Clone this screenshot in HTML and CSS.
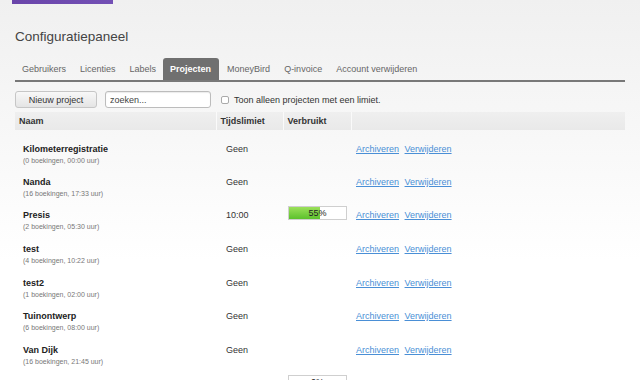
FILE: index.html
```html
<!DOCTYPE html>
<html lang="nl">
<head>
  <meta charset="UTF-8" />
  <title>Configuratiepaneel</title>
  <link rel="stylesheet" href="styles.css">
</head>
<body>
  <div class="topbar"></div>
  <div class="container">
    <h2>Configuratiepaneel</h2>

    <ul class="tabs">
      <li>Gebruikers</li>
      <li>Licenties</li>
      <li>Labels</li>
      <li class="active">Projecten</li>
      <li>MoneyBird</li>
      <li>Q-invoice</li>
      <li>Account verwijderen</li>
    </ul>

    <div class="toolbar">
      <button>Nieuw project</button>
      <input type="text" placeholder="zoeken...">
      <label class="filter"><input type="checkbox"> Toon alleen projecten met een limiet.</label>
    </div>

    <table class="projects">
      <colgroup>
        <col class="col-name">
        <col class="col-limit">
        <col class="col-used">
        <col class="col-actions">
      </colgroup>
      <thead>
        <tr>
          <th>Naam</th>
          <th>Tijdslimiet</th>
          <th>Verbruikt</th>
          <th></th>
        </tr>
      </thead>
      <tbody id="project-rows">
        <!-- rijen via JS -->
      </tbody>
    </table>
  </div>

  <script>
    const projecten = [
      { naam: "Kilometerregistratie", boekingen: 0, uren: "00:00", limiet: null },
      { naam: "Nanda", boekingen: 16, uren: "17:33", limiet: null },
      { naam: "Presis", boekingen: 2, uren: "05:30", limiet: "10:00", verbruikt: 55 },
      { naam: "test", boekingen: 4, uren: "10:22", limiet: null },
      { naam: "test2", boekingen: 1, uren: "02:00", limiet: null },
      { naam: "Tuinontwerp", boekingen: 6, uren: "08:00", limiet: null },
      { naam: "Van Dijk", boekingen: 16, uren: "21:45", limiet: null },
      { naam: "Verbouwing", boekingen: 0, uren: "00:00", limiet: "20:00", verbruikt: 0 }
    ];

    const rows = document.getElementById('project-rows');

    projecten.forEach(p => {
      const tr = document.createElement('tr');
      let verbruik = '';
      if (p.limiet) {
        verbruik = `
          <div class="progress">
            <div class="progress-fill" style="width:${p.verbruikt}%"></div>
            <span>${p.verbruikt}%</span>
          </div>`;
      }
      tr.innerHTML = `
        <td class="cell-name">
          <div class="name">${p.naam}</div>
          <div class="sub">(${p.boekingen} boekingen, ${p.uren} uur)</div>
        </td>
        <td class="cell-limit">${p.limiet || 'Geen'}</td>
        <td class="cell-used">${verbruik}</td>
        <td class="cell-actions"><a href="#">Archiveren</a> <a href="#">Verwijderen</a></td>
      `;
      rows.appendChild(tr);
    });
  </script>
</body>
</html>
```

FILE: styles.css
```css
body {
  margin: 0;
  font-family: 'Liberation Sans', Arial, sans-serif;
  font-size: 9px;
  color: #333;
  background: linear-gradient(#f0f0f0, #f8f8f8 140px, #fff 260px);
  min-height: 380px;
  overflow: hidden;
}

.topbar {
  width: 101px;
  height: 4px;
  margin-left: 12px;
  background: linear-gradient(90deg, #6a45aa, #7350b5);
}

.container {
  width: 610px;
  padding: 0 15px;
}

h2 {
  margin: 25px 0 0;
  font-size: 13.5px;
  line-height: 16px;
  font-weight: normal;
  color: #444;
}

.tabs {
  list-style: none;
  display: flex;
  margin: 13px 0 0;
  padding: 0;
  border-bottom: 2px solid #787878;
}

.tabs li {
  height: 22px;
  line-height: 22px;
  padding: 0 7px;
  color: #666;
}

.tabs li.active {
  background-color: #707070;
  color: #fff;
  font-weight: bold;
  border-radius: 3px 3px 0 0;
  padding: 0 8px 0 7px;
  margin-right: 1px;
}

.toolbar {
  display: flex;
  align-items: center;
  margin-top: 9px;
  height: 17px;
}

.toolbar button {
  height: 17px;
  width: 82px;
  padding: 0;
  font-family: inherit;
  font-size: 9px;
  color: #333;
  background: linear-gradient(#f8f8f8, #e4e4e4);
  border: 1px solid #c6c6c6;
  border-radius: 3px;
}

.toolbar input[type="text"] {
  box-sizing: border-box;
  height: 17px;
  width: 106px;
  margin-left: 8px;
  padding: 0 4px;
  font-family: inherit;
  font-size: 9px;
  border: 1px solid #bcbcbc;
  border-radius: 3px;
  background: #fff;
  box-shadow: inset 0 1px 1px rgba(0, 0, 0, 0.08);
}

.toolbar input::placeholder {
  color: #444;
}

.filter {
  display: flex;
  align-items: center;
  margin-left: 10px;
  color: #333;
}

.filter input {
  appearance: none;
  width: 8px;
  height: 8px;
  margin: 0 5px 0 0;
  border: 1px solid #aaa;
  border-radius: 2px;
  background: #fff;
}

.projects {
  margin-top: 4px;
  width: 610px;
  border-collapse: collapse;
  table-layout: fixed;
}

.col-name { width: 201px; }
.col-limit { width: 67px; }
.col-used { width: 68px; }

.projects th,
.projects td {
  box-sizing: border-box;
}

.projects th {
  height: 19px;
  padding: 0 4px;
  text-align: left;
  font-weight: bold;
  color: #333;
  background: linear-gradient(#efefef, #e9e9e9);
  border-left: 1px solid #fafafa;
  border-bottom: 2px solid transparent;
  background-clip: padding-box;
}

.projects th:first-child {
  border-left: none;
}

.projects td {
  height: 34px;
  vertical-align: top;
  padding: 11px 5px 0;
}

.projects tr:nth-child(3n+2) td {
  height: 33px;
}

.projects td.cell-name {
  padding-left: 8px;
}

.projects td.cell-limit {
  padding-left: 10px;
  line-height: 13px;
  color: #333;
}

.projects td.cell-used {
  padding-top: 8px;
}

.projects td.cell-actions {
  line-height: 13px;
}

.name {
  font-weight: bold;
  line-height: 13px;
  color: #222;
}

.sub {
  margin-top: 1px;
  font-size: 7px;
  line-height: 8px;
  color: #777;
}

.progress {
  position: relative;
  width: 57px;
  height: 12px;
  border: 1px solid #cfcfcf;
  background: #fff;
}

.progress-fill {
  height: 100%;
  background: linear-gradient(#9be05a, #5cc12c);
}

.progress span {
  position: absolute;
  left: 0;
  right: 0;
  top: 0;
  line-height: 12px;
  text-align: center;
  color: #222;
}

a {
  color: #4a8fd6;
  text-decoration: underline;
  margin-right: 3px;
}
```
